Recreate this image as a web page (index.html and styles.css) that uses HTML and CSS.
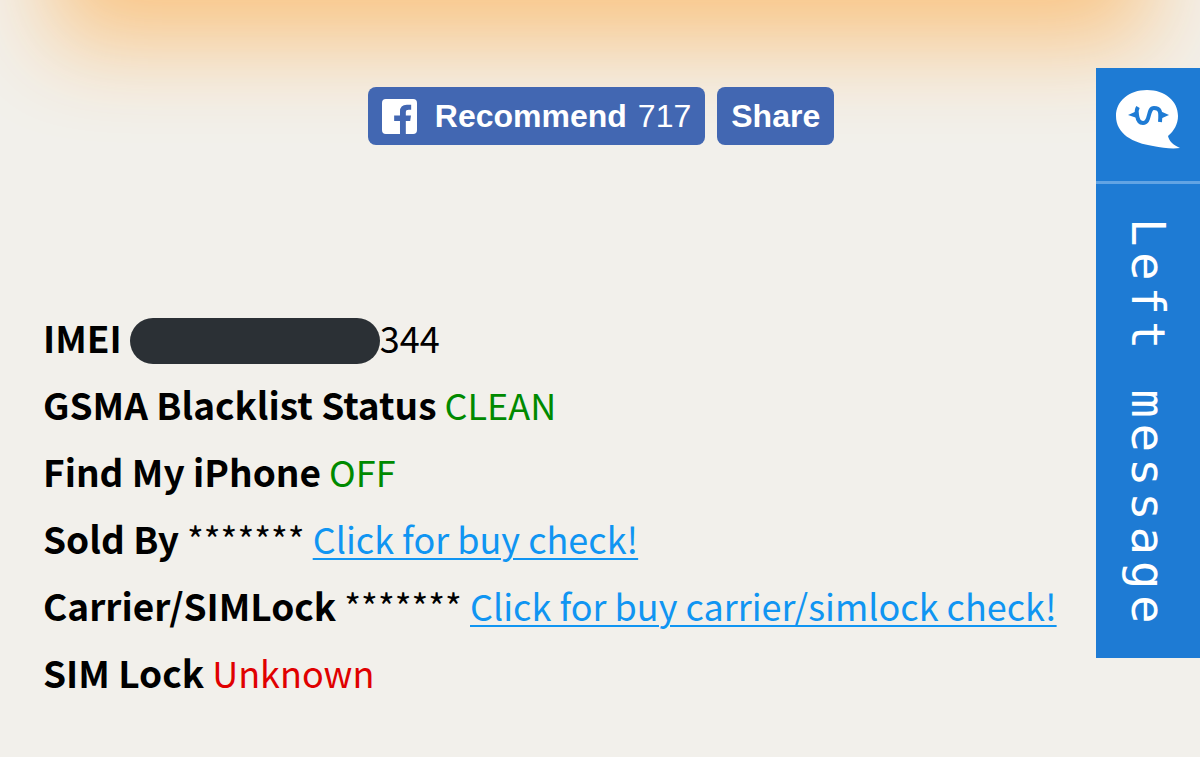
FILE: index.html
```html
<!DOCTYPE html>
<html lang="en">
<head>
<meta charset="utf-8">
<meta name="viewport" content="width=device-width, initial-scale=1">
<title>IMEI check</title>
<link rel="stylesheet" href="styles.css">
</head>
<body>
<div class="glow"></div>
<main class="page">
  <div class="social">
    <button class="social-button" type="button">
      <svg class="social-icon" viewBox="0 0 36 36" aria-hidden="true">
        <path fill="#fff" d="M4 0h28a4 4 0 0 1 4 4v28a4 4 0 0 1-4 4h-7.500V22.500h4.500l.8-5.500h-5.300v-3.500q0-2.500 3-2.500h2.500V6h-4.500q-7 0-7 7v4h-6v5.500h6V36H4a4 4 0 0 1-4-4V4a4 4 0 0 1 4-4z"/>
      </svg>
      <span class="social-label">Recommend</span>
      <span class="social-count">717</span>
    </button>
    <button class="social-button" type="button">Share</button>
  </div>
  <div class="report">
    <div class="row"><strong>IMEI</strong> <span class="redacted"></span>344</div>
    <div class="row"><strong>GSMA Blacklist Status</strong> <span class="good">CLEAN</span></div>
    <div class="row"><strong>Find My iPhone</strong> <span class="good">OFF</span></div>
    <div class="row"><strong>Sold By</strong> ******* <a href="#buy">Click for buy check!</a></div>
    <div class="row"><strong>Carrier/SIMLock</strong> ******* <a href="#carrier">Click for buy carrier/simlock check!</a></div>
    <div class="row"><strong>SIM Lock</strong> <span class="bad">Unknown</span></div>
  </div>
</main>
<button class="chat" type="button">
  <span class="chat-head">
    <svg class="chat-icon" viewBox="0 0 64 60" aria-hidden="true">
      <path fill="#fff" d="M31 0C13 0 0 11 0 26c0 18 17 27 37 30 10 2 19 3 27 2-7-3-11-7-12-12 6-5 10-12 10-20C62 11 49 0 31 0z"/>
      <path fill="none" stroke="#1e7bd4" stroke-width="4" d="M22 17q-2 3-1 8 1 8 6 8c8 0 4-15 11-15 6 0 7 3 6 14"/>
      <path fill="#1e7bd4" d="M12 25l9-4v7zM53 25l-9-4v8z"/>
    </svg>
  </span>
  <span class="chat-label">Left message</span>
</button>
</body>
</html>
```
FILE: styles.css
```css
* {
  box-sizing: border-box;
}

body {
  margin: 0;
  min-height: 100vh;
  overflow-x: hidden;
  background: #f2f0eb;
  color: #000;
  font-family: "Noto Sans CJK SC", "Noto Sans", sans-serif;
}

/* Soft orange shadow cast down from the banner above */
.glow {
  height: 200px;
  margin: -200px 52px 0;
  box-shadow: 0 42px 92px #fac482;
}

.page {
  position: relative;
  padding: 87px 43px 48px;
}

.social {
  display: flex;
  justify-content: center;
  gap: 12px;
  padding-left: 2px;
}

.social-button {
  display: flex;
  align-items: center;
  height: 58px;
  padding: 0 14px;
  border: 0;
  border-radius: 8px;
  background: #4267b2;
  color: #fff;
  font: bold 32px "Liberation Sans", Arial, sans-serif;
}

.social-icon {
  width: 35px;
  height: 35px;
  margin-right: 18px;
}

.social-count {
  margin-left: 11px;
  font-weight: normal;
}

.report {
  margin-top: 159px;
  font-size: 36px;
  line-height: 67px;
}

.report strong {
  font-size: 37px;
}

.redacted {
  display: inline-block;
  width: 250px;
  height: 46px;
  margin-top: -4px;
  border-radius: 23px;
  background: #2b3035;
  vertical-align: middle;
}

.good {
  color: #008a00;
}

.bad {
  color: #e00000;
}

a {
  color: #1095f2;
  text-decoration-thickness: 2px;
  text-underline-offset: 4px;
}

.chat {
  position: fixed;
  top: 68px;
  right: 0;
  display: flex;
  flex-direction: column;
  align-items: stretch;
  width: 104px;
  padding: 0;
  border: 0;
  background: #1e7bd4;
  color: #fff;
}

.chat-head {
  display: flex;
  justify-content: center;
  padding: 22px 0 31px;
  border-bottom: 3px solid #62a4e4;
}

.chat-icon {
  width: 64px;
  height: 60px;
}

.chat-label {
  align-self: center;
  padding: 34px 0 28px;
  font-family: "DejaVu Sans Mono", monospace;
  font-size: 47px;
  line-height: 68px;
  letter-spacing: 6px;
  writing-mode: vertical-rl;
  white-space: nowrap;
}
```
